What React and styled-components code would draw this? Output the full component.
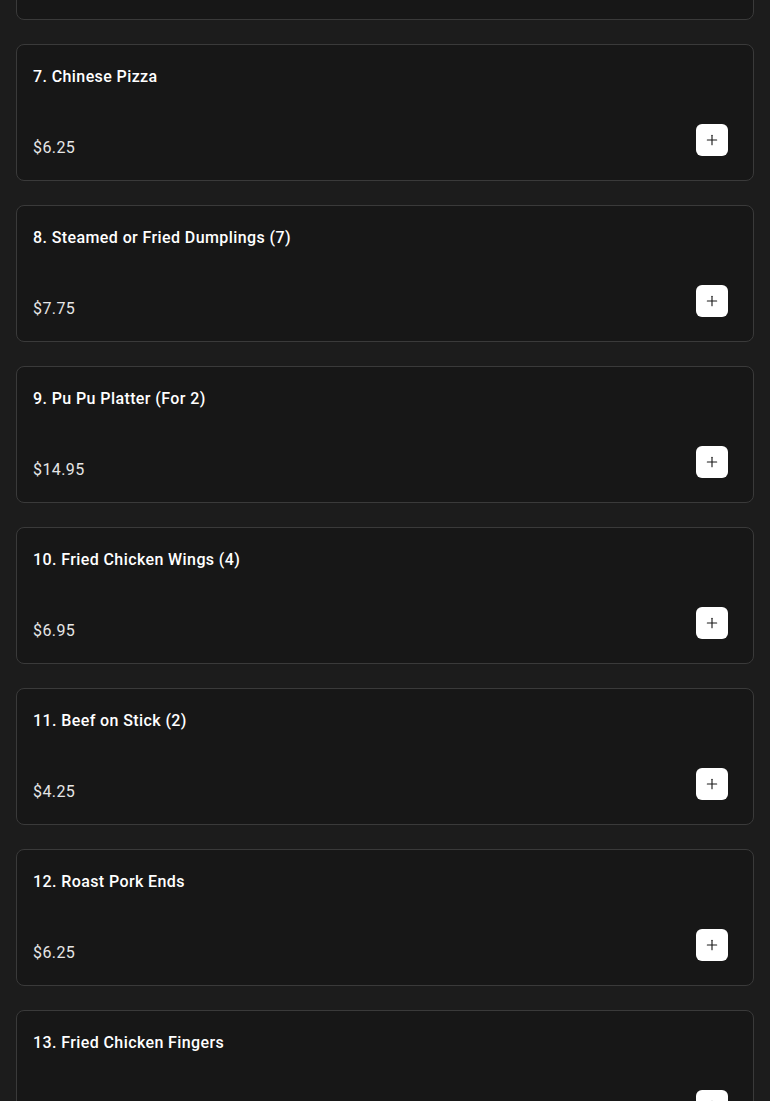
import React, { useLayoutEffect, useRef } from "react";
import styled, { createGlobalStyle } from "styled-components";
import { Plus } from "lucide-react";

const Global = createGlobalStyle`
  html, body { margin: 0; padding: 0; background: #1c1c1c; }
  body { font-family: Roboto, "Noto Sans", Arial, sans-serif; }
  * { box-sizing: border-box; }
`;

const Viewport = styled.div`
  height: 100vh;
  overflow: hidden;
  background: #1c1c1c;
`;

const List = styled.div`
  display: flex;
  flex-direction: column;
  gap: 24px;
  padding: 16px;
`;

const Card = styled.div`
  display: flex;
  flex-direction: column;
  justify-content: space-between;
  height: 137px;
  padding: 16px;
  background: #171717;
  border: 1px solid #3a3a3a;
  border-radius: 8px;
`;

const Title = styled.div`
  font-size: 16px;
  font-weight: 500;
  line-height: 32px;
  letter-spacing: 0.4px;
  color: #ffffff;
`;

const Footer = styled.div`
  display: flex;
  justify-content: space-between;
  align-items: flex-end;
`;

const Price = styled.div`
  font-size: 16px;
  font-weight: 400;
  line-height: 32px;
  letter-spacing: 0.4px;
  color: #e6e6e6;
`;

const AddButton = styled.button`
  display: flex;
  align-items: center;
  justify-content: center;
  width: 32px;
  height: 32px;
  margin: 0 9px 8px 0;
  padding: 0;
  border: none;
  border-radius: 6px;
  background: #ffffff;
  color: #1a1a1a;
  cursor: pointer;
`;

const items = [
  ["1. Egg Roll (1)", "$2.25"],
  ["2. Shrimp Egg Roll (1)", "$2.50"],
  ["3. Spring Roll (2)", "$3.50"],
  ["4. Crab Rangoon (8)", "$7.25"],
  ["5. Boneless Spare Ribs", "$9.95"],
  ["6. Teriyaki Chicken (4)", "$6.95"],
  ["7. Chinese Pizza", "$6.25"],
  ["8. Steamed or Fried Dumplings (7)", "$7.75"],
  ["9. Pu Pu Platter (For 2)", "$14.95"],
  ["10. Fried Chicken Wings (4)", "$6.95"],
  ["11. Beef on Stick (2)", "$4.25"],
  ["12. Roast Pork Ends", "$6.25"],
  ["13. Fried Chicken Fingers", "$7.25"],
  ["14. Fried Shrimp (10)", "$7.95"],
];

export default function App() {
  const ref = useRef(null);
  useLayoutEffect(() => {
    if (ref.current) ref.current.scrollTop = 938;
  }, []);
  return (
    <>
      <Global />
      <Viewport ref={ref}>
        <List>
          {items.map(([name, price]) => (
            <Card key={name}>
              <Title>{name}</Title>
              <Footer>
                <Price>{price}</Price>
                <AddButton aria-label={`Add ${name}`}>
                  <Plus size={16} strokeWidth={1.7} />
                </AddButton>
              </Footer>
            </Card>
          ))}
        </List>
      </Viewport>
    </>
  );
}
